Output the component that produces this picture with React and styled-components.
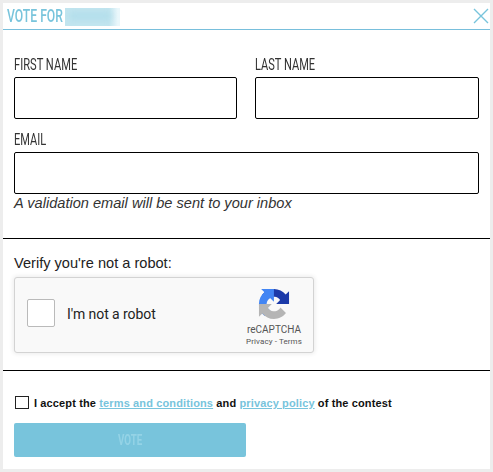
import { useState } from 'react';
import styled, { createGlobalStyle } from 'styled-components';

const GlobalStyle = createGlobalStyle`
  * {
    box-sizing: border-box;
  }

  body {
    margin: 0;
    background-color: #ededed;
    font-family: 'Liberation Sans', Arial, sans-serif;
    color: #222;
  }
`;

const Modal = styled.form`
  width: 487px;
  height: 466px;
  margin: 3px;
  background-color: #fff;
`;

const Header = styled.header`
  display: flex;
  justify-content: space-between;
  height: 27px;
  padding: 0 0 0 4px;
  border-bottom: 1px solid #78bfdc;
`;

const Title = styled.div`
  display: flex;
  color: #78c4dc;
`;

const Condensed = styled.span`
  display: block;
  width: ${({ $width }) => $width}px;
  font-family: Roboto, sans-serif;
  font-size: ${({ $size }) => $size || 16.5}px;
  font-weight: ${({ $weight }) => $weight || 400};
  line-height: ${({ $line }) => $line || 24}px;
  white-space: nowrap;
  transform: scaleX(${({ $scale }) => $scale});
  transform-origin: left center;
`;

const BlurredName = styled.div`
  width: 55px;
  height: 18px;
  margin: 5px 0 0 2px;
  overflow: hidden;
  background: linear-gradient(to right, #c2e5ef 80%, #eaf7fb 96%);

  &::before {
    content: '';
    display: block;
    width: 42px;
    height: 8px;
    margin: 4px 0 0 4px;
    background-color: #b2deeb;
    filter: blur(3px);
  }
`;

const CloseButton = styled.button`
  display: flex;
  width: 17px;
  height: 16px;
  margin-top: 5px;
  padding: 0;
  border: 0;
  background: none;
  cursor: pointer;
`;

const Fields = styled.section`
  display: grid;
  grid-template-columns: 223px 224px;
  column-gap: 18px;
  height: 209px;
  padding: 23px 11px 0;
  align-content: start;
  border-bottom: 1px solid #000;
`;

const Field = styled.label`
  display: block;
  height: 75px;
  color: #333;
  grid-column: ${({ $wide }) => ($wide ? '1 / -1' : 'auto')};
`;

const Input = styled.input`
  display: block;
  width: 100%;
  height: 42px;
  padding: 0 10px;
  border: 1px solid #000;
  border-radius: 2px;
  outline: none;
  font-size: 15px;
`;

const Hint = styled.em`
  grid-column: 1 / -1;
  margin-top: -9px;
  color: #333;
  font-size: 14.6px;
  line-height: 18px;
  white-space: nowrap;
`;

const Verification = styled.section`
  height: 132px;
  padding: 15px 11px 0;
  border-bottom: 1px solid #000;
`;

const VerifyText = styled.p`
  margin: 0 0 5px;
  font-size: 14.6px;
  line-height: 18px;
`;

const Captcha = styled.div`
  display: flex;
  align-items: center;
  width: 300px;
  height: 76px;
  padding-left: 12px;
  border: 1px solid #d3d3d3;
  border-radius: 3px;
  background-color: #f9f9f9;
  box-shadow: 0 0 4px 1px rgba(0, 0, 0, 0.08);
  font-family: Roboto, sans-serif;
`;

const CaptchaCheck = styled.input`
  appearance: none;
  flex: none;
  width: 28px;
  height: 28px;
  margin: 0 12px 4px 0;
  border: 1px solid #bababa;
  border-radius: 2px;
  background-color: #fff;

  &:checked {
    background-color: #4285f4;
  }
`;

const CaptchaLabel = styled.label`
  flex: 1;
  margin-bottom: 2px;
  font-size: 14px;
  letter-spacing: -0.07px;
`;

const CaptchaBrand = styled.div`
  display: flex;
  flex-direction: column;
  align-items: center;
  align-self: flex-start;
  width: 76px;
  margin-right: 1px;
  padding-top: 10px;
  color: #555;
  font-size: 10px;
  line-height: 12px;

  svg {
    margin-bottom: 4px;
  }
`;

const CaptchaLinks = styled.span`
  font-size: 8px;
  line-height: 11px;
  letter-spacing: 0.1px;
`;

const Footer = styled.section`
  padding: 23px 11px 0;
`;

const Terms = styled.label`
  display: flex;
  align-items: center;
  height: 18px;
  color: #111;
  font-size: 11px;
  font-weight: bold;
  letter-spacing: 0.13px;
  white-space: pre;

  a {
    color: #78c4dc;
  }
`;

const TermsCheck = styled.input`
  appearance: none;
  width: 14px;
  height: 13px;
  margin: 0 5px 1px 1px;
  border: 1px solid #222;

  &:checked {
    background-color: #78c4dc;
  }
`;

const VoteButton = styled.button`
  display: flex;
  justify-content: center;
  align-items: center;
  width: 232px;
  height: 34px;
  margin-top: 11px;
  padding: 0;
  border: 0;
  border-radius: 2px;
  background-color: #78c4dc;
  color: #94d3e6;
`;

const RecaptchaLogo = () => (
  <svg width='32' height='32' viewBox='0 0 68 68'>
    <g transform='translate(2 2)'>
      <path
        fill='#1c3aa9'
        d='M64 31.955l-.033-1.37V4.687l-7.16 7.16C50.948 4.674 42.033.093 32.05.093c-10.4 0-19.622 4.96-25.458 12.64l11.736 11.86a15.55 15.55 0 0 1 4.754-5.334c2.05-1.6 4.952-2.906 8.968-2.906.485 0 .86.057 1.135.163 4.976.393 9.288 3.14 11.828 7.124l-8.307 8.307L64 31.953'
      />
      <path
        fill='#4285f4'
        d='M31.862.094l-1.37.033H4.594l7.16 7.16C4.58 13.147 0 22.06 0 32.046c0 10.4 4.96 19.622 12.64 25.458L24.5 45.768a15.55 15.55 0 0 1-5.334-4.754c-1.6-2.05-2.906-4.952-2.906-8.968 0-.485.057-.86.163-1.135.393-4.976 3.14-9.288 7.124-11.828l8.307 8.307L31.86.095'
      />
      <path
        fill='#b5b5b5'
        d='M.001 32.045l.033 1.37v25.898l7.16-7.16c5.86 7.173 14.774 11.754 24.76 11.754 10.4 0 19.622-4.96 25.458-12.64l-11.736-11.86a15.55 15.55 0 0 1-4.754 5.334c-2.05 1.6-4.952 2.906-8.968 2.906-.485 0-.86-.057-1.135-.163-4.976-.393-9.288-3.14-11.828-7.124l8.307-8.307c-10.522.04-22.4.066-27.295-.005'
      />
    </g>
  </svg>
);

const App = () => {
  const [values, setValues] = useState({ firstName: '', lastName: '', email: '' });
  const [human, setHuman] = useState(false);
  const [accepted, setAccepted] = useState(false);

  const changeHandler = event => {
    setValues({ ...values, [event.target.name]: event.target.value });
  };

  return (
    <>
      <GlobalStyle />
      <Modal onSubmit={e => e.preventDefault()}>
        <Header>
          <Title>
            <Condensed $width={56} $size={19} $weight={500} $scale={0.64} $line={26}>VOTE FOR</Condensed>
            <BlurredName />
          </Title>
          <CloseButton type='button'>
            <svg width='16' height='16' viewBox='0 0 16 16' stroke='#78c4dc' strokeWidth='1.4'>
              <path d='M1 1l14 14M15 1L1 15' />
            </svg>
          </CloseButton>
        </Header>
        <Fields>
          <Field>
            <Condensed $width={64} $scale={0.675}>FIRST NAME</Condensed>
            <Input name='firstName' value={values.firstName} onChange={changeHandler} />
          </Field>
          <Field>
            <Condensed $width={60} $scale={0.67}>LAST NAME</Condensed>
            <Input name='lastName' value={values.lastName} onChange={changeHandler} />
          </Field>
          <Field $wide>
            <Condensed $width={33} $scale={0.67}>EMAIL</Condensed>
            <Input name='email' value={values.email} onChange={changeHandler} />
          </Field>
          <Hint>A validation email will be sent to your inbox</Hint>
        </Fields>
        <Verification>
          <VerifyText>Verify you're not a robot:</VerifyText>
          <Captcha>
            <CaptchaCheck type='checkbox' id='human' checked={human} onChange={() => setHuman(!human)} />
            <CaptchaLabel htmlFor='human'>I'm not a robot</CaptchaLabel>
            <CaptchaBrand>
              <RecaptchaLogo />
              <span>reCAPTCHA</span>
              <CaptchaLinks>Privacy - Terms</CaptchaLinks>
            </CaptchaBrand>
          </Captcha>
        </Verification>
        <Footer>
          <Terms>
            <TermsCheck type='checkbox' checked={accepted} onChange={() => setAccepted(!accepted)} />
            <span>
              I accept the <a href='#terms'>terms and conditions</a> and <a href='#privacy'>privacy policy</a> of the
              contest
            </span>
          </Terms>
          <VoteButton disabled={!accepted}>
            <Condensed $width={24} $size={15.5} $weight={700} $scale={0.63}>VOTE</Condensed>
          </VoteButton>
        </Footer>
      </Modal>
    </>
  );
};

export default App;
